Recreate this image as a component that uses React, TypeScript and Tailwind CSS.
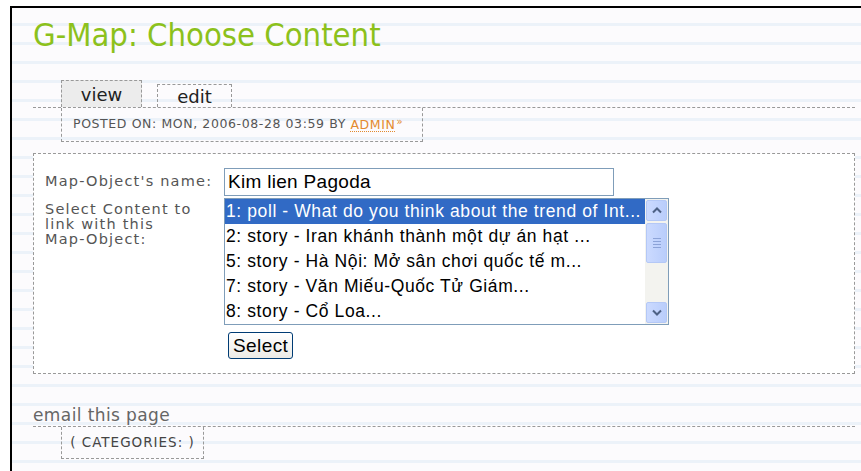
import React from "react";

// Items offered in the content picker
const contentOptions = [
  "1: poll - What do you think about the trend of Int...",
  "2: story - Iran khánh thành một dự án hạt ...",
  "5: story - Hà Nội: Mở sân chơi quốc tế m...",
  "7: story - Văn Miếu-Quốc Tử Giám...",
  "8: story - Cổ Loa...",
];

/** XP style scrollbar arrow button */
function ScrollButton({ up }: { up?: boolean }) {
  return (
    <div className="h-[21px] w-full rounded-[2px] border border-[#b4c8f6] bg-[linear-gradient(to_right,#cbdaff,#b9cdfb)] flex items-center justify-center">
      <svg width="10" height="7" viewBox="0 0 10 7">
        <path
          d={up ? "M1 5.5 L5 1.5 L9 5.5" : "M1 1.5 L5 5.5 L9 1.5"}
          fill="none"
          stroke="#4d6185"
          strokeWidth="2"
        />
      </svg>
    </div>
  );
}

function ContentList() {
  return (
    <div className="flex w-[445px] h-[127px] border border-[#7f9db9] bg-white">
      <div className="flex-1 overflow-hidden font-['Liberation_Sans',Arial,sans-serif] text-[17.5px] tracking-[0.6px] text-black">
        {contentOptions.map((item, idx) => (
          <div
            key={item}
            className={
              idx === 0
                ? "h-[25px] leading-[25px] pl-[1px] whitespace-nowrap bg-[#316ac5] text-white"
                : "h-[25px] leading-[25px] pl-[1px] whitespace-nowrap"
            }
          >
            {item}
          </div>
        ))}
      </div>
      {/* scrollbar */}
      <div className="w-[23px] flex flex-col bg-[#f3f3ef] p-[1px]">
        <ScrollButton up />
        <div className="mt-[2px] h-[40px] rounded-[2px] border border-[#b4c8f6] bg-[linear-gradient(to_right,#cbdaff,#b9cdfb)] flex flex-col items-center justify-center gap-[2px]">
          <div className="w-[8px] h-[1px] bg-[#8ca3d8]" />
          <div className="w-[8px] h-[1px] bg-[#8ca3d8]" />
          <div className="w-[8px] h-[1px] bg-[#8ca3d8]" />
          <div className="w-[8px] h-[1px] bg-[#8ca3d8]" />
        </div>
        <div className="flex-1" />
        <ScrollButton />
      </div>
    </div>
  );
}

export default function App() {
  return (
    <div className="w-[861px] h-[471px] bg-white pl-[10px] pt-[6px] overflow-hidden">
      <div className="h-full border-l-2 border-t-2 border-black pl-[21px] pr-[6px] bg-[image:repeating-linear-gradient(to_bottom,#fcfbfd_0px,#fcfbfd_15px,#ecf2f9_15px,#ecf2f9_18px,#fcfbfd_18px,#fcfbfd_19px)]">
        {/* 제목 */}
        <h1 className="pt-[8px] text-[32.5px] leading-[39px] text-[#8cc11c] font-['DejaVu_Sans_Condensed','DejaVu_Sans',sans-serif] font-stretch-condensed">
          G-Map: Choose Content
        </h1>

        {/* 탭 */}
        <div className="mt-[25px] flex items-end border-b border-dashed border-[#999] pl-[28px] gap-[15px] font-['DejaVu_Sans',Verdana,sans-serif] text-[18px] text-[#222]">
          <div className="w-[81px] h-[27px] leading-[27px] text-center bg-[#ececec] border-t border-x border-dashed border-[#999]">
            view
          </div>
          <div className="w-[75px] h-[23px] leading-[23px] text-center border-t border-x border-dashed border-[#999]">
            edit
          </div>
        </div>

        {/* 작성 정보 */}
        <div className="ml-[28px] w-[362px] h-[34px] border-x border-b border-dashed border-[#999] pl-[11px] flex items-center font-['DejaVu_Sans',Verdana,sans-serif] text-[12.5px] tracking-[0.6px] text-[#555] whitespace-nowrap">
          POSTED ON: MON, 2006-08-28 03:59 BY&nbsp;
          <span className="text-[#e38a2e] border-b border-dotted border-[#e38a2e] leading-[13px]">ADMIN</span>
          <span className="text-[#e38a2e] text-[10px] leading-[10px] -translate-y-[3px] ml-[1px]">»</span>
        </div>

        {/* 폼 */}
        <div className="mt-[11px] h-[221px] border border-dashed border-[#999] bg-white pt-[14px] pl-[11px] font-['DejaVu_Sans',Verdana,sans-serif] text-[14.5px] tracking-[1.2px] text-[#555]">
          <div className="flex items-center">
            <div className="w-[179px]">Map-Object's name:</div>
            <div className="w-[390px] h-[28px] border border-[#7f9db9] bg-white pl-[3px] leading-[26px] font-['Liberation_Sans',Arial,sans-serif] text-[19px] tracking-[0.3px] text-black">
              Kim lien Pagoda
            </div>
          </div>
          <div className="mt-[2px] flex">
            <div className="w-[179px] pt-[4px] leading-[15px]">
              Select Content to
              <br />
              link with this
              <br />
              Map-Object:
            </div>
            <div>
              <ContentList />
              <button className="mt-[7px] ml-[4px] h-[27px] px-[4px] rounded-[3px] border border-[#003c74] bg-[linear-gradient(to_bottom,#ffffff,#ecebe6)] font-['Liberation_Sans',Arial,sans-serif] text-[19px] leading-[25px] tracking-[0.4px] text-black">
                Select
              </button>
            </div>
          </div>
        </div>

        {/* 하단 링크 */}
        <div className="mt-[30px] border-b border-dashed border-[#999] font-['DejaVu_Sans',Verdana,sans-serif] text-[17px] tracking-[0.4px] leading-[22px] text-[#666]">
          email this page
        </div>
        <div className="ml-[28px] w-[143px] h-[32px] border-x border-b border-dashed border-[#999] flex items-center justify-center font-['DejaVu_Sans',Verdana,sans-serif] text-[13.5px] tracking-[1px] text-[#444]">
          ( CATEGORIES: )
        </div>
      </div>
    </div>
  );
}
